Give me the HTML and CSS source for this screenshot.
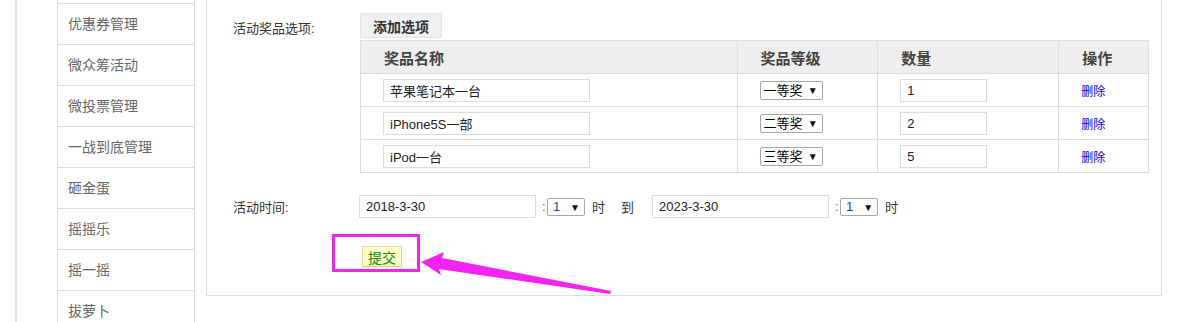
FILE: index.html
```html
<!DOCTYPE html>
<html lang="zh-CN">
<head>
    <meta charset="UTF-8">
    <title>活动设置</title>
    <link rel="stylesheet" href="styles.css">
</head>
<body>
    <div class="page">
        <div class="rail"></div>

        <ul class="menu">
            <li>优惠券管理</li>
            <li>微众筹活动</li>
            <li>微投票管理</li>
            <li>一战到底管理</li>
            <li>砸金蛋</li>
            <li>摇摇乐</li>
            <li>摇一摇</li>
            <li>拔萝卜</li>
        </ul>

        <div class="panel">
            <div class="form-row">
                <div class="label prize-label">活动奖品选项:</div>
                <div class="field">
                    <button type="button" class="btn-add">添加选项</button>
                    <table class="prize-table">
                        <tr>
                            <th class="col-name">奖品名称</th>
                            <th class="col-level">奖品等级</th>
                            <th class="col-num">数量</th>
                            <th class="col-op">操作</th>
                        </tr>
                        <tr>
                            <td><input type="text" class="txt-name" value="苹果笔记本一台"></td>
                            <td><span class="sel sel-level"><select><option>一等奖</option></select></span></td>
                            <td><input type="text" class="txt-num" value="1"></td>
                            <td><a href="#" class="del">删除</a></td>
                        </tr>
                        <tr>
                            <td><input type="text" class="txt-name" value="iPhone5S一部"></td>
                            <td><span class="sel sel-level"><select><option>二等奖</option></select></span></td>
                            <td><input type="text" class="txt-num" value="2"></td>
                            <td><a href="#" class="del">删除</a></td>
                        </tr>
                        <tr>
                            <td><input type="text" class="txt-name" value="iPod一台"></td>
                            <td><span class="sel sel-level"><select><option>三等奖</option></select></span></td>
                            <td><input type="text" class="txt-num" value="5"></td>
                            <td><a href="#" class="del">删除</a></td>
                        </tr>
                    </table>
                </div>
            </div>

            <div class="form-row time-row">
                <div class="label">活动时间:</div>
                <div class="field time-field">
                    <input type="text" class="txt-date" value="2018-3-30">
                    <span class="colon">:</span>
                    <span class="sel sel-hour"><select><option>1</option></select></span>
                    <span class="unit">时</span>
                    <span class="to">到</span>
                    <input type="text" class="txt-date" value="2023-3-30">
                    <span class="colon">:</span>
                    <span class="sel sel-hour"><select><option>1</option></select></span>
                    <span class="unit">时</span>
                </div>
            </div>

            <div class="form-row submit-row">
                <div class="label"></div>
                <button type="submit" class="btn-submit">提交</button>
            </div>
        </div>
    </div>

    <svg class="annotation" width="1182" height="322" viewBox="0 0 1182 322">
        <rect x="333.5" y="235.5" width="85" height="35" fill="none" stroke="#f222f2" stroke-width="3"/>
        <polygon points="421,262 444,252 442,258 611,291 610,294 439,269 441,275" fill="#f222f2"/>
    </svg>
</body>
</html>
```

FILE: styles.css
```css
body {
    margin: 0;
    font-family: "Liberation Sans", "Noto Sans CJK SC", sans-serif;
    font-size: 13px;
    color: #333;
    background-color: #fff;
    overflow: hidden;
}
.page {
    display: flex;
    align-items: flex-start;
    height: 322px;
}
.rail {
    margin-left: 15px;
    width: 2px;
    height: 322px;
    background-color: #e2e2e2;
}

/* left menu */
.menu {
    list-style: none;
    margin: 0 0 0 40px;
    padding: 3px 0 0 0;
    width: 136px;
    border-left: 1px solid #ddd;
    border-right: 1px solid #ddd;
    height: 319px;
    overflow: hidden;
}
.menu li {
    border-top: 1px solid #ddd;
    height: 40px;
    line-height: 40px;
    padding-left: 10px;
    font-size: 14px;
    color: #666;
}

/* main panel */
.panel {
    box-sizing: border-box;
    margin-left: 11px;
    width: 956px;
    height: 296px;
    border: 1px solid #ddd;
    border-top: none;
    padding: 13px 0 0 26px;
}
.form-row {
    display: flex;
}
.label {
    width: 127px;
    flex-shrink: 0;
    font-size: 13px;
    color: #333;
}
.prize-label {
    padding-top: 6px;
    line-height: 20px;
}
.btn-add {
    display: block;
    height: 25px;
    width: 82px;
    padding: 0;
    margin-bottom: 2px;
    border: 1px solid #e2e2e2;
    background-color: #f0f0f0;
    font-family: inherit;
    font-size: 14px;
    font-weight: bold;
    color: #333;
}

/* prize table */
.prize-table {
    border-collapse: collapse;
    width: 789px;
}
.prize-table th,
.prize-table td {
    border: 1px solid #ddd;
    height: 33px;
    padding: 0 0 0 22px;
    text-align: left;
    box-sizing: border-box;
}
.prize-table th {
    background-color: #eee;
    font-size: 15px;
    color: #444;
    padding-left: 23px;
}
.col-name { width: 377px; }
.col-level { width: 141px; }
.col-num { width: 181px; }
.col-op { width: 90px; }

.prize-table input {
    box-sizing: border-box;
    height: 23px;
    border: 1px solid #ddd;
    padding: 0 6px;
    font-family: inherit;
    font-size: 13px;
    color: #222;
    vertical-align: middle;
}
.txt-name { width: 207px; }
.txt-num { width: 87px; }
.del {
    color: #00f;
    font-size: 12px;
    text-decoration: none;
}

/* fake native select */
.sel {
    position: relative;
    display: inline-block;
    vertical-align: middle;
}
.sel select {
    appearance: none;
    -webkit-appearance: none;
    box-sizing: border-box;
    border: 1px solid #a6a6a6;
    border-radius: 2px;
    background-color: #fff;
    font-family: inherit;
    font-size: 13px;
    color: #000;
    padding: 0 0 0 4px;
    margin: 0;
}
.sel::after {
    content: "\25BC";
    position: absolute;
    right: 5px;
    top: 50%;
    transform: translateY(-50%);
    font-size: 10px;
    color: #111;
    pointer-events: none;
}
.sel-level select {
    width: 63px;
    height: 19px;
    padding-left: 3px;
}
.sel-hour select {
    width: 38px;
    height: 18px;
    padding-left: 5px;
    color: #1a3f9a;
}

/* time row */
.time-row {
    margin-top: 22px;
    align-items: center;
}
.time-field {
    display: flex;
    align-items: center;
    margin-left: -1px;
}
.txt-date {
    box-sizing: border-box;
    width: 177px;
    height: 23px;
    border: 1px solid #ddd;
    padding: 0 6px;
    font-family: inherit;
    font-size: 13px;
    color: #222;
}
.colon {
    margin: 0 1px 0 6px;
    color: #666;
    width: 4px;
}
.unit {
    margin-left: 7px;
    color: #333;
}
.to {
    margin: 0 18px 0 16px;
    color: #333;
}

/* submit */
.submit-row {
    margin-top: 28px;
}
.btn-submit {
    margin-left: 2px;
    width: 40px;
    height: 21px;
    padding: 0;
    border: 1px solid #f3d9a6;
    border-right-color: #f0c27e;
    border-bottom-color: #f0c27e;
    background-color: #ffffc6;
    font-family: inherit;
    font-size: 14px;
    color: #0a8a0a;
}

.annotation {
    position: absolute;
    left: 0;
    top: 0;
    pointer-events: none;
}
```
